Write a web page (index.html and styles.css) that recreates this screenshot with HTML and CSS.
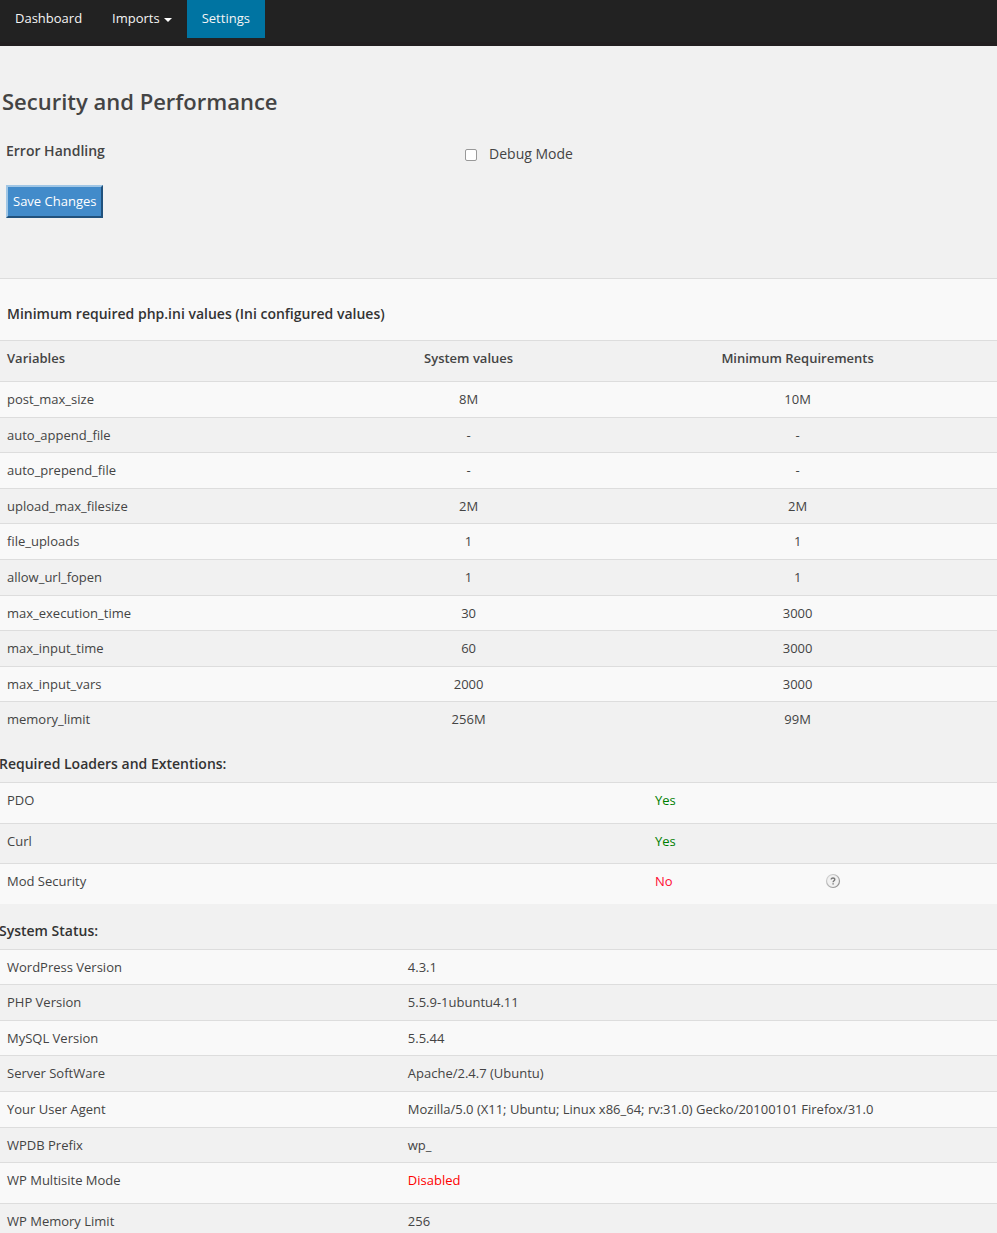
FILE: index.html
```html
<!DOCTYPE html>
<html lang="en">
<head>
<meta charset="utf-8">
<title>Settings</title>
<link rel="stylesheet" href="styles.css">
</head>
<body>
<nav class="navbar">
  <a class="nav-item" href="#">Dashboard</a>
  <a class="nav-item" href="#">Imports <span class="caret"></span></a>
  <a class="nav-item active" href="#" aria-current="page">Settings</a>
</nav>
<main>
  <form class="settings">
    <h1 class="title">Security and Performance</h1>
    <div class="setting">
      <h2 class="setting-name">Error Handling</h2>
      <label class="check"><input type="checkbox" class="check-box">Debug Mode</label>
    </div>
    <button type="button" class="save">Save Changes</button>
  </form>

  <table class="table ini">
    <colgroup><col class="ini-name"><col class="ini-system"><col class="ini-minimum"></colgroup>
    <tr><th colspan="3" class="caption">Minimum required php.ini values (Ini configured values)</th></tr>
    <tr class="head"><th>Variables</th><th>System values</th><th>Minimum Requirements</th></tr>
    <tr><td>post_max_size</td><td>8M</td><td>10M</td></tr>
    <tr><td>auto_append_file</td><td>-</td><td>-</td></tr>
    <tr><td>auto_prepend_file</td><td>-</td><td>-</td></tr>
    <tr><td>upload_max_filesize</td><td>2M</td><td>2M</td></tr>
    <tr><td>file_uploads</td><td>1</td><td>1</td></tr>
    <tr><td>allow_url_fopen</td><td>1</td><td>1</td></tr>
    <tr><td>max_execution_time</td><td>30</td><td>3000</td></tr>
    <tr><td>max_input_time</td><td>60</td><td>3000</td></tr>
    <tr><td>max_input_vars</td><td>2000</td><td>3000</td></tr>
    <tr><td>memory_limit</td><td>256M</td><td>99M</td></tr>
  </table>

  <h3 class="section">Required Loaders and Extentions:</h3>
  <table class="table">
    <colgroup><col class="ext-name"><col class="ext-state"><col></colgroup>
    <tr class="tall"><td>PDO</td><td class="yes">Yes</td><td></td></tr>
    <tr class="tall"><td>Curl</td><td class="yes">Yes</td><td></td></tr>
    <tr class="tall"><td>Mod Security</td><td class="no">No</td><td>
      <svg class="help" viewBox="0 0 16 16" role="img" aria-label="Help">
        <defs><linearGradient id="rim" x1="0" y1="0" x2="1" y2="1"><stop offset="0" stop-color="#ddd"/><stop offset="1" stop-color="#858585"/></linearGradient></defs>
        <circle cx="8" cy="8" r="6.5" fill="#f1f1f1" stroke="url(#rim)" stroke-width="1.2"/>
        <path d="M6.2 6.6C6.2 4.4 9.9 4.5 9.8 6.6C9.7 7.7 8.1 7.8 8.1 9.2M8.1 10.2V11.6" fill="none" stroke="#777" stroke-width="1.4"/>
      </svg></td></tr>
  </table>

  <h3 class="section">System Status:</h3>
  <table class="table status">
    <colgroup><col class="status-name"><col></colgroup>
    <tr><td>WordPress Version</td><td>4.3.1</td></tr>
    <tr><td>PHP Version</td><td>5.5.9-1ubuntu4.11</td></tr>
    <tr><td>MySQL Version</td><td>5.5.44</td></tr>
    <tr><td>Server SoftWare</td><td>Apache/2.4.7 (Ubuntu)</td></tr>
    <tr><td>Your User Agent</td><td>Mozilla/5.0 (X11; Ubuntu; Linux x86_64; rv:31.0) Gecko/20100101 Firefox/31.0</td></tr>
    <tr><td>WPDB Prefix</td><td>wp_</td></tr>
    <tr class="tall"><td>WP Multisite Mode</td><td class="disabled">Disabled</td></tr>
    <tr><td>WP Memory Limit</td><td>256</td></tr>
  </table>
</main>
</body>
</html>
```
FILE: styles.css
```css
* { box-sizing: border-box; }
body {
  margin: 0;
  background: #f1f1f1;
  color: #444;
  font: 13px/1.43 "Open Sans", sans-serif;
}
.navbar {
  display: flex;
  align-items: flex-start;
  background: #222;
  border-bottom: 4px solid #221f20;
  padding-bottom: 4px;
}
.nav-item {
  display: flex;
  align-items: center;
  gap: 4px;
  height: 38px;
  padding: 0 15px 2px;
  color: #f5f5f5;
  text-decoration: none;
}
.active { background: #0074a2; }
.caret {
  margin-top: 4px;
  border: 4px solid transparent;
  border-top-color: #fff;
  border-bottom: 0;
}
.settings { padding: 39px 6px 60px; }
.title {
  margin: 0 -4px;
  font-size: 22px;
  line-height: 32px;
  font-weight: 600;
}
.setting {
  display: grid;
  grid-template-columns: 46% 1fr;
  align-items: start;
  padding-top: 24px;
}
.setting-name {
  margin: 0;
  font-size: 14px;
  line-height: 20px;
  font-weight: 600;
}
.check {
  display: flex;
  align-items: center;
  gap: 12px;
  padding: 3px 0 0 6px;
  font-size: 14px;
  line-height: 20px;
}
.check-box {
  appearance: none;
  width: 12px;
  height: 12px;
  margin: 2px 0 0;
  border: 1px solid #999;
  border-radius: 2px;
  background: #fff;
}
.save {
  display: block;
  margin-top: 21px;
  padding: 5px;
  border: 2px solid;
  border-color: #a0c6e5 #21527d #21527d #a0c6e5;
  background: #428bca;
  color: #fff;
  font: inherit;
}
.table {
  width: 100%;
  table-layout: fixed;
  border-collapse: separate;
  border-spacing: 0;
}
.table td, .table th {
  padding: 8px 7px;
  border-top: 1px solid #ddd;
  text-align: left;
  vertical-align: top;
  font-weight: 400;
}
.table tr:nth-child(odd) { background: #f9f9f9; }
.table .tall td { padding-bottom: 13px; }
.table .head th { padding-bottom: 14px; font-weight: 600; }
.table .caption {
  padding: 25px 7px 16px;
  color: #333;
  font-size: 14px;
  line-height: 20px;
  font-weight: 600;
}
.ini td + td, .ini th + th { text-align: center; }
.ini-name { width: 34%; }
.ini-system { width: 26%; }
.ini-minimum { width: 40%; }
.ext-name { width: 65%; }
.ext-state { width: 17%; }
.status-name { width: 40%; }
.status td + td { padding-left: 9px; }
.section {
  margin: 17px -1px 8px;
  color: #333;
  font-size: 14px;
  line-height: 20px;
  font-weight: 600;
}
.table .yes { color: #008000; }
.table .no { color: #ff0a32; }
.table .disabled { color: #f00; }
.help { display: block; width: 16px; height: 16px; margin-top: 1px; }
```
